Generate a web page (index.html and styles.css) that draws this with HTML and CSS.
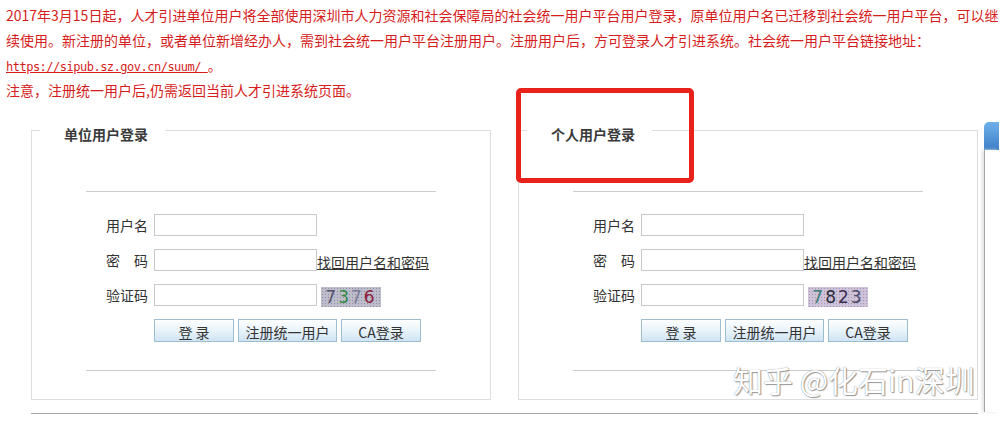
FILE: index.html
```html
<!DOCTYPE html>
<html lang="zh-CN">
<head>
    <meta charset="UTF-8">
    <meta name="viewport" content="width=device-width, initial-scale=1.0">
    <title>人才引进 - 用户登录</title>
    <link rel="stylesheet" href="styles.css">
</head>
<body>
    <!-- Notice -->
    <div class="notice">
        2017年3月15日起，人才引进单位用户将全部使用深圳市人力资源和社会保障局的社会统一用户平台用户登录，原单位用户名已迁移到社会统一用户平台，可以继续使用。新注册的单位，或者单位新增经办人，需到社会统一用户平台注册用户。注册用户后，方可登录人才引进系统。社会统一用户平台链接地址：<a class="notice-link" href="#">https://sipub.sz.gov.cn/suum/&nbsp;</a>。<br>
        注意，注册统一用户后,仍需返回当前人才引进系统页面。
    </div>

    <div class="layout">
        <div class="content">
            <div class="panels">
                <!-- Unit login -->
                <fieldset class="panel">
                    <legend>单位用户登录</legend>
                    <hr class="rule rule-top">
                    <form class="login-form">
                        <div class="form-row">
                            <label class="form-label">用户名</label>
                            <input type="text" class="form-input">
                        </div>
                        <div class="form-row">
                            <label class="form-label">密　码</label>
                            <input type="password" class="form-input">
                            <a class="forgot" href="#">找回用户名和密码</a>
                        </div>
                        <div class="form-row">
                            <label class="form-label">验证码</label>
                            <input type="text" class="form-input">
                            <span class="captcha captcha-a">
                                <span class="c1">7</span><span class="c2">3</span><span class="c3">7</span><span class="c4">6</span>
                            </span>
                        </div>
                        <div class="form-row btn-row">
                            <button type="button" class="btn btn-login">登 录</button>
                            <button type="button" class="btn btn-reg">注册统一用户</button>
                            <button type="button" class="btn btn-ca">CA登录</button>
                        </div>
                    </form>
                    <hr class="rule rule-bottom">
                </fieldset>

                <!-- Personal login -->
                <fieldset class="panel">
                    <legend>个人用户登录</legend>
                    <hr class="rule rule-top">
                    <form class="login-form">
                        <div class="form-row">
                            <label class="form-label">用户名</label>
                            <input type="text" class="form-input">
                        </div>
                        <div class="form-row">
                            <label class="form-label">密　码</label>
                            <input type="password" class="form-input">
                            <a class="forgot" href="#">找回用户名和密码</a>
                        </div>
                        <div class="form-row">
                            <label class="form-label">验证码</label>
                            <input type="text" class="form-input">
                            <span class="captcha captcha-b">
                                <span class="d1">7</span><span class="d2">8</span><span class="d3">2</span><span class="d4">3</span>
                            </span>
                        </div>
                        <div class="form-row btn-row">
                            <button type="button" class="btn btn-login">登 录</button>
                            <button type="button" class="btn btn-reg">注册统一用户</button>
                            <button type="button" class="btn btn-ca">CA登录</button>
                        </div>
                    </form>
                    <hr class="rule rule-bottom">
                </fieldset>
            </div>
            <div class="bottom-rule"></div>
        </div>

        <!-- Side box (cut off at the window edge) -->
        <div class="side">
            <div class="side-head"></div>
            <div class="side-body"></div>
        </div>
    </div>

    <!-- Annotation + watermark -->
    <div class="highlight"></div>
    <div class="watermark">知乎 @化石in深圳</div>
</body>
</html>
```

FILE: styles.css
```css
/* General Styles */
body {
    margin: 0;
    padding: 0;
    font-family: "Noto Sans CJK SC", sans-serif;
    font-size: 14px;
    color: #333;
    background: #fff;
    overflow: hidden;
    position: relative;
}

/* Notice */
.notice {
    padding: 3px 0 0 6px;
    line-height: 25px;
    color: #d61c1c;
}
.notice-link {
    font-family: "DejaVu Sans Mono", monospace;
    font-size: 12px;
    letter-spacing: -0.5px;
    line-height: 20px;
    color: #d61c1c;
    text-decoration: underline;
}

/* Layout */
.layout {
    display: flex;
    margin-top: 13px;
    padding-left: 31px;
}
.panels {
    display: flex;
    gap: 27px;
}
.bottom-rule {
    height: 1px;
    margin-top: 13px;
    background: #a9a9a9;
}

/* Panels */
.panel {
    width: 460px;
    box-sizing: border-box;
    margin: 0;
    padding: 0 0 28px;
    border: 1px solid #dedede;
    min-width: 0;
}
.panel legend {
    margin-left: 8px;
    padding: 8px 17px 0 24px;
    line-height: 20px;
    font-size: 14px;
    font-weight: bold;
    color: #3a3a3a;
}
.rule {
    width: 350px;
    height: 1px;
    margin: 0 auto;
    border: none;
    background: #cccccc;
}
.rule-top {
    margin-top: 47px;
}
.rule-bottom {
    margin-top: 28px;
}

/* Form */
.login-form {
    margin-top: 22px;
    padding-left: 74px;
    display: flex;
    flex-direction: column;
    gap: 13px;
}
.form-row {
    display: flex;
    align-items: center;
    height: 22px;
}
.form-label {
    width: 42px;
    margin-right: 6px;
    text-align: right;
    white-space: nowrap;
    line-height: 20px;
}
.form-input {
    width: 163px;
    height: 22px;
    box-sizing: border-box;
    margin: 0;
    border: 1px solid #c9c9c9;
    background: #fff;
}
.forgot {
    align-self: flex-end;
    line-height: 18px;
    color: #333;
    text-decoration: underline;
    white-space: nowrap;
}

/* Captcha */
.captcha {
    display: inline-flex;
    align-items: center;
    justify-content: center;
    align-self: flex-end;
    width: 60px;
    height: 20px;
    margin-left: 4px;
    margin-bottom: -1px;
    font-family: "DejaVu Sans", sans-serif;
    font-size: 17px;
    letter-spacing: 2px;
    background-size: 3px 3px;
}
.captcha-a {
    background-color: #bdbccb;
    background-image: radial-gradient(#8f8ea6 0.7px, transparent 1px);
}
.captcha-b {
    background-color: #cdc2d8;
    background-image: radial-gradient(#a294b4 0.7px, transparent 1px);
}
.c1 { color: #56546e; }
.c2 { color: #2f8a45; }
.c3 { color: #7c7a98; }
.c4 { color: #8c1c3c; }
.d1 { color: #3d7c78; }
.d2 { color: #2e2a3a; }
.d3 { color: #3e3052; }
.d4 { color: #4a4866; }

/* Buttons */
.btn-row {
    height: 23px;
    padding-left: 48px;
    gap: 4px;
}
.btn {
    height: 23px;
    box-sizing: border-box;
    margin: 0;
    padding: 3px 0 0;
    font-family: "Noto Sans CJK SC", sans-serif;
    font-size: 14px;
    line-height: 18px;
    color: #333;
    border: 1px solid #9dbdd0;
    background: linear-gradient(#fdfeff, #e9f3fa 50%, #cfe4f3);
    cursor: pointer;
}
.btn-login { width: 80px; }
.btn-reg { width: 99px; }
.btn-ca { width: 80px; }

/* Side box */
.side {
    width: 15px;
    margin-top: 6px;
    margin-left: 6px;
    flex-shrink: 0;
}
.side-head {
    height: 28px;
    border-radius: 5px 0 0 0;
    background: linear-gradient(#6fb0ea, #3f80c8);
}
.side-body {
    height: 262px;
    border-left: 1px solid #a6a6a6;
    box-shadow: -2px 0 3px #e2e2e2;
    background: #fff;
}

/* Red annotation box */
.highlight {
    position: absolute;
    left: 516px;
    top: 88px;
    width: 168px;
    height: 85px;
    border: 5px solid #e8221b;
    border-radius: 5px;
}

/* Watermark */
.watermark {
    position: absolute;
    left: 733px;
    top: 361px;
    font-size: 30px;
    line-height: 36px;
    color: #fff;
    white-space: nowrap;
    text-shadow: 0 0 1px #7a7a7a, 1px 1px 1px #9a9a9a;
}
```
